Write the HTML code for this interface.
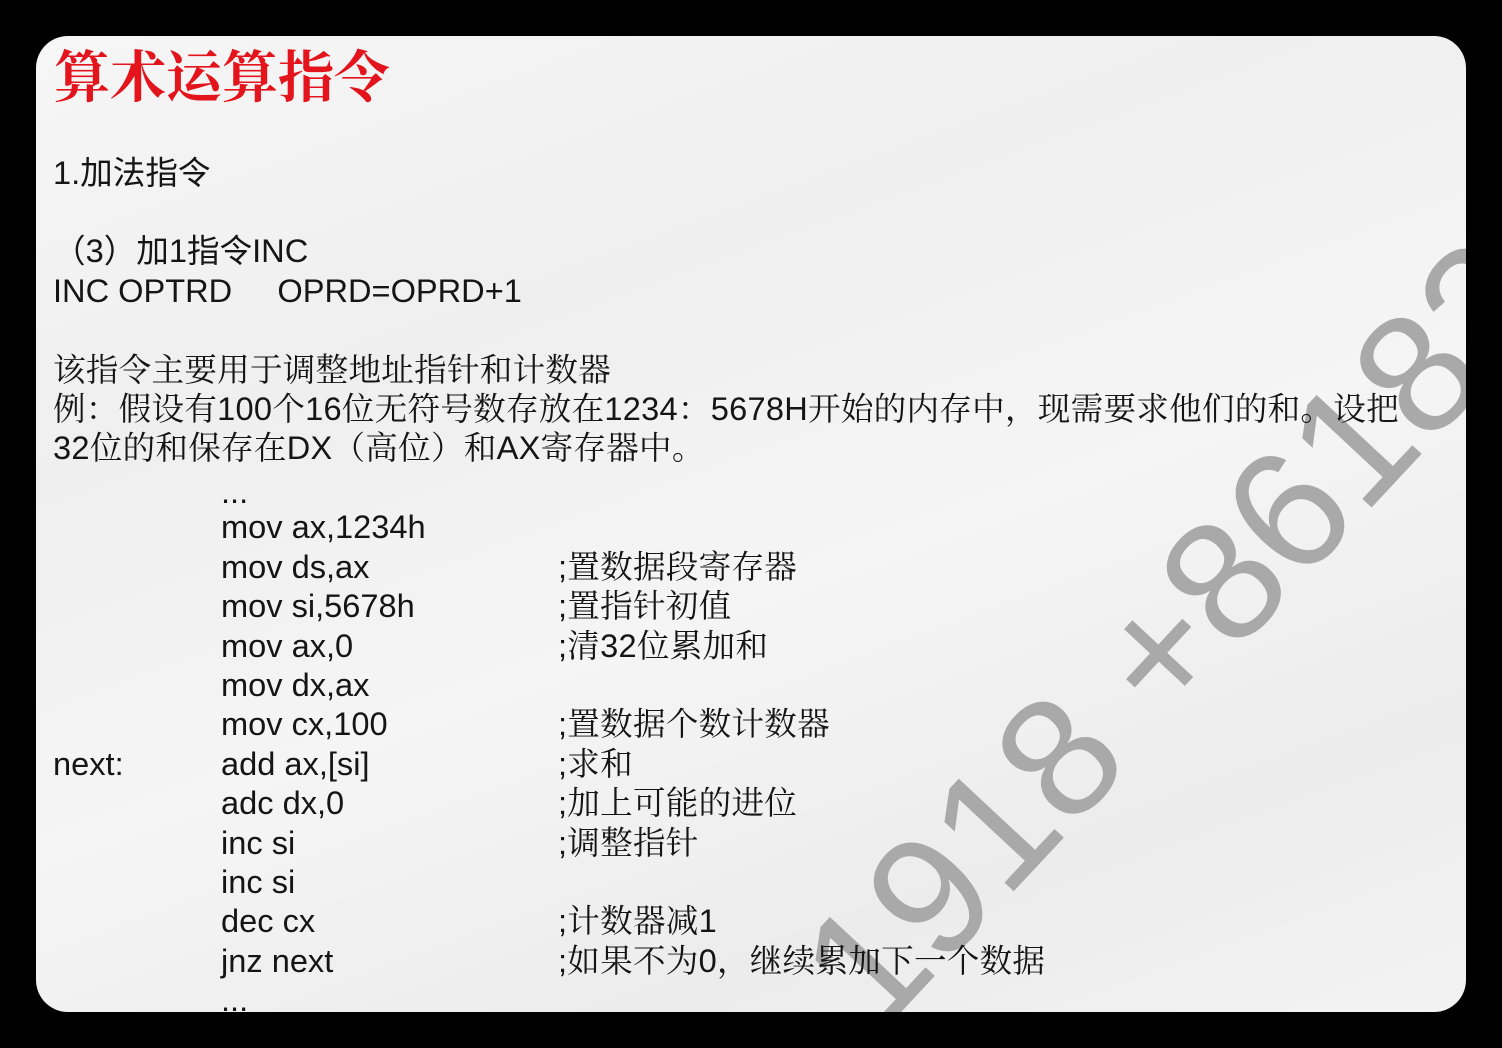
<!DOCTYPE html>
<html><head><meta charset="utf-8"><style>
html,body{margin:0;padding:0;background:#000;width:1502px;height:1048px;overflow:hidden}
.slide{position:absolute;left:36px;top:36px;width:1430px;height:976px;border-radius:32px;overflow:hidden;
background:linear-gradient(160deg,#f6f6f6 0%,#efefef 30%,#f5f5f5 55%,#ececec 80%,#f3f3f3 100%)}
.t{position:absolute;font-family:"Liberation Sans","Noto Sans CJK SC",sans-serif;font-size:32.6px;line-height:40px;color:#151515;white-space:pre}
.cn{font-family:"Liberation Sans","Noto Serif CJK SC",serif;letter-spacing:0.25px}
.title{position:absolute;left:18px;top:8px;font-family:"Liberation Serif","Noto Serif CJK SC",serif;font-size:56px;line-height:70px;color:#e3141c;font-weight:bold}
svg{position:absolute;left:0;top:0}
</style></head><body>
<div class="slide">
<svg width="1430" height="976"><text x="0" y="0" transform="translate(840,1003) rotate(-47)" font-family="Liberation Sans, sans-serif" font-size="170" fill="#a9a9a9">1918 +86182</text></svg>
<div class="title">算术运算指令</div>
<div class="t" style="left:17px;top:117px">1.加法指令</div>
<div class="t" style="left:17px;top:195px">（3）加1指令INC</div>
<div class="t" style="left:17px;top:235px">INC OPTRD     OPRD=OPRD+1</div>
<div class="t cn" style="left:17px;top:314px">该指令主要用于调整地址指针和计数器</div>
<div class="t cn" style="left:17px;top:353px">例：假设有100个16位无符号数存放在1234：5678H开始的内存中，现需要求他们的和。设把</div>
<div class="t cn" style="left:17px;top:392px">32位的和保存在DX（高位）和AX寄存器中。</div>
<div class="t" style="left:185px;top:436px">...</div>
<div class="t" style="left:185px;top:471px">mov ax,1234h</div>
<div class="t" style="left:185px;top:511px">mov ds,ax</div>
<div class="t" style="left:185px;top:550px">mov si,5678h</div>
<div class="t" style="left:185px;top:590px">mov ax,0</div>
<div class="t" style="left:185px;top:629px">mov dx,ax</div>
<div class="t" style="left:185px;top:668px">mov cx,100</div>
<div class="t" style="left:17px;top:708px">next:</div>
<div class="t" style="left:185px;top:708px">add ax,[si]</div>
<div class="t" style="left:185px;top:747px">adc dx,0</div>
<div class="t" style="left:185px;top:787px">inc si</div>
<div class="t" style="left:185px;top:826px">inc si</div>
<div class="t" style="left:185px;top:865px">dec cx</div>
<div class="t" style="left:185px;top:905px">jnz next</div>
<div class="t" style="left:185px;top:944px">...</div>
<div class="t cn" style="left:522px;top:511px">;置数据段寄存器</div>
<div class="t cn" style="left:522px;top:550px">;置指针初值</div>
<div class="t cn" style="left:522px;top:590px">;清32位累加和</div>
<div class="t cn" style="left:522px;top:668px">;置数据个数计数器</div>
<div class="t cn" style="left:522px;top:708px">;求和</div>
<div class="t cn" style="left:522px;top:747px">;加上可能的进位</div>
<div class="t cn" style="left:522px;top:787px">;调整指针</div>
<div class="t cn" style="left:522px;top:865px">;计数器减1</div>
<div class="t cn" style="left:522px;top:905px">;如果不为0，继续累加下一个数据</div>
</div>
</body></html>
